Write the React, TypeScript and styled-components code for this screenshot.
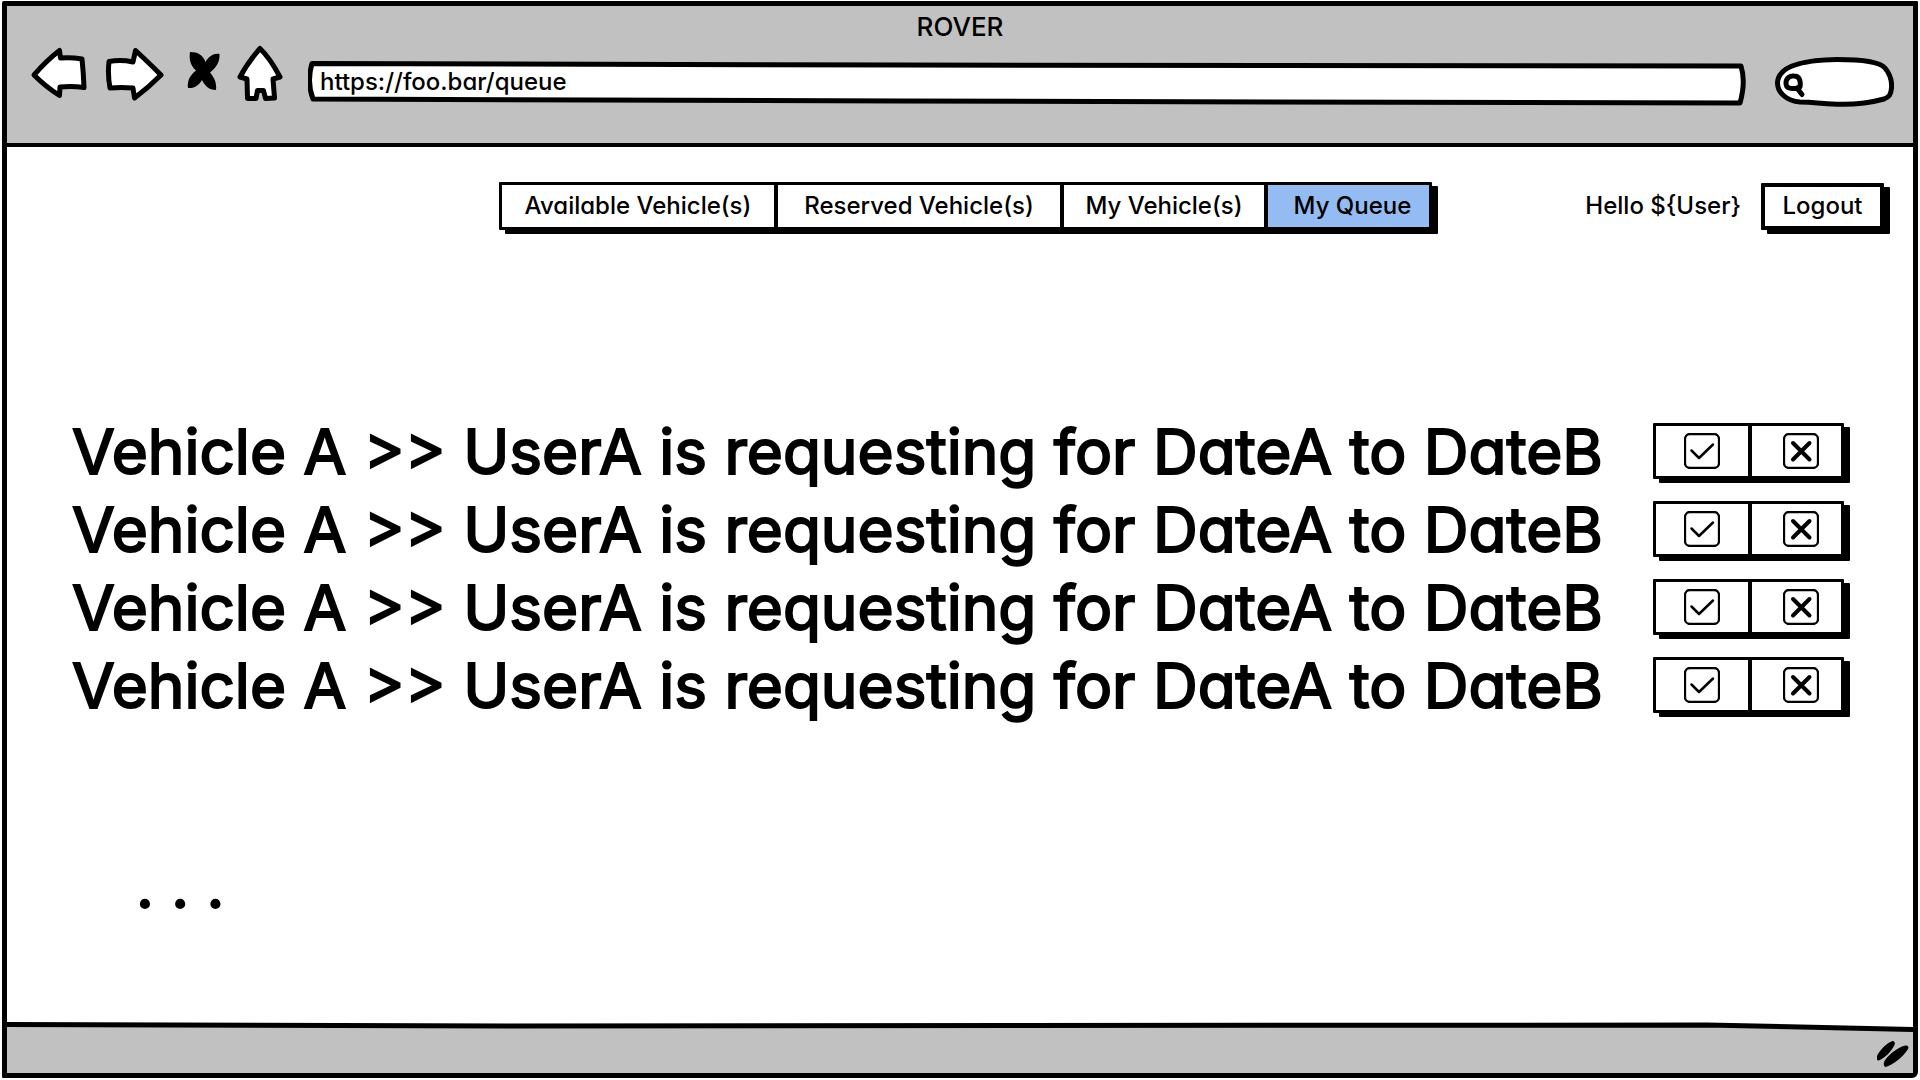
import React, { useState } from "react";
import styled, { createGlobalStyle, css } from "styled-components";

const INK = "#000000";
const CHROME = "#c1c1c1";
const PAPER = "#ffffff";
const ACTIVE = "#94bbf2";

const GlobalStyle = createGlobalStyle`
  *, *::before, *::after { box-sizing: border-box; }
  body {
    margin: 0;
    background: ${PAPER};
    color: ${INK};
    font-family: Inter, "Liberation Sans", sans-serif;
    font-size: 24px;
    font-weight: 500;
    line-height: 32px;
    font-feature-settings: "cv11";
  }
  button, input {
    font: inherit;
    font-feature-settings: inherit;
    color: inherit;
  }
`;

const Page = styled.div`
  display: flex;
  min-height: 100vh;
  padding: 1px 2px 2px;
`;

const Frame = styled.div`
  flex: 1;
  display: flex;
  flex-direction: column;
  border: 5px solid ${INK};
  border-radius: 2px 1px 6px 1px;
  overflow: hidden;
`;

/* Browser chrome */

const Chrome = styled.header`
  padding: 5px 19px 36px 23px;
  background: ${CHROME};
  border-bottom: 4px solid ${INK};
`;

const WindowTitle = styled.h1`
  margin: 0 0 2px;
  padding-right: 4px;
  font-size: 26px;
  font-weight: 500;
  line-height: 32px;
  text-align: center;
`;

const Toolbar = styled.div`
  display: flex;
  align-items: flex-end;
`;

const HistoryControls = styled.div`
  display: flex;
  gap: 16px;
  padding-bottom: 6px;
`;

const PlainButton = styled.button`
  display: flex;
  align-items: center;
  justify-content: center;
  padding: 0;
  border: 0;
  background: none;
  cursor: pointer;
`;

const Sketch = styled.svg`
  display: block;
  fill: ${PAPER};
  stroke: ${INK};
  stroke-width: 5px;
  stroke-linejoin: round;
  stroke-linecap: round;
`;

const Field = styled.div`
  position: relative;
  display: flex;
`;

const FieldOutline = styled(Sketch)`
  position: absolute;
  inset: 0;
  width: 100%;
  height: 100%;
`;

const AddressField = styled(Field)`
  flex: 1;
  height: 46px;
  margin: 0 28px 0 24px;
`;

const SearchField = styled(Field)`
  width: 120px;
  height: 50px;
`;

const FieldInput = styled.input`
  position: relative;
  flex: 1;
  min-width: 0;
  height: 40px;
  padding: 0 12px;
  border: 0;
  background: none;
  outline: none;
`;

const SearchInput = styled(FieldInput)`
  padding: 0 16px 0 32px;
`;

/* Application */

const Content = styled.main`
  flex: 1;
  padding-top: 35px;
`;

const TopBar = styled.div`
  display: grid;
  grid-template-columns: 1fr auto 1fr;
  align-items: center;
  padding: 0 29px 0 40px;
`;

const sketchBox = css`
  border: 3px solid ${INK};
  border-radius: 1px;
  background: ${PAPER};
  box-shadow: 6px 4px 0 ${INK};
`;

const Segments = styled.div`
  ${sketchBox}
  display: flex;
`;

const Segment = styled(PlainButton)<{ $width: number; $height: number; $active?: boolean }>`
  width: ${(p) => p.$width}px;
  height: ${(p) => p.$height}px;
  background: ${(p) => (p.$active ? ACTIVE : PAPER)};
  white-space: nowrap;

  & + & {
    border-left: 4px solid ${INK};
  }

  &:last-child {
    padding-left: 8px;
  }
`;

const TabBar = styled.nav`
  grid-column: 2;
`;

const Account = styled.div`
  display: flex;
  align-items: center;
  justify-content: flex-end;
  gap: 20px;
`;

const LogoutButton = styled(PlainButton)`
  ${sketchBox}
  width: 123px;
  height: 47px;
  border-width: 4px;
`;

const RequestList = styled.ul`
  margin: 183px 0 0;
  padding: 0 69px 0 65px;
  list-style: none;
`;

const largeText = css`
  font-size: 62px;
  font-weight: 400;
  line-height: 78px;
  -webkit-text-stroke: 2px ${INK};
`;

const RequestRow = styled.li`
  display: flex;
  align-items: center;
  justify-content: space-between;
  gap: 32px;
`;

const RequestText = styled.span`
  ${largeText}
`;

const Decision = styled.div`
  padding-bottom: 2px;
`;

const More = styled.p`
  ${largeText}
  margin: 122px 0 0;
  padding-left: 129px;
`;

const StatusBar = styled.footer`
  background: ${CHROME};
`;

const StatusRule = styled.svg`
  display: block;
  width: 100%;
  height: 10px;
  background: ${PAPER};
`;

const StatusBody = styled.div`
  display: flex;
  justify-content: flex-end;
  padding: 8px 4px 5px;
`;

const BackIcon = () => (
  <Sketch width="58" height="56" viewBox="30 45 58 56" aria-hidden="true">
    <path d="M34 75 Q46 61 59.500 50.500 L60.500 58 Q71 57 82 59 Q83.500 73 84 87.500 Q72 86 60 87 L59.500 95.500 Q46 87 34 75Z" />
  </Sketch>
);

const ForwardIcon = () => (
  <Sketch width="60" height="56" viewBox="104 45 60 56" aria-hidden="true">
    <path d="M109 61.500 Q121 59.500 133 62 L135.500 50.500 Q147 61 161 75 Q149 87 134.500 98 L133 88 Q121 87 110 88 Q107.500 75 109 61.500Z" />
  </Sketch>
);

const StopIcon = () => (
  <svg width="40" height="56" viewBox="180 45 40 56" aria-hidden="true">
    <path
      fill={INK}
      d="M190 52C198 52 203 55 205.500 62C209 56 214 53 219.500 54C220 62 216 68 210 72.500C214 77 217 83 216 90C209 90 205 86 202 80C199 85 195 88.500 188 88C187 81 190 75 196 70.500C190 65 189 59 190 52Z"
    />
  </svg>
);

const HomeIcon = () => (
  <Sketch width="48" height="56" viewBox="236 45 48 56" aria-hidden="true">
    <path d="M260 48.500 Q270 58 280 77 L273 79 L274.500 98 L265.500 98.500 L263.500 90.500 L257.500 90.500 L256 98.500 L247.500 98.500 L247 79 L240 77 Q248 62 260 48.500Z" />
  </Sketch>
);

const CheckIcon = () => (
  <svg width="36" height="36" viewBox="0 0 36 36" fill="none" stroke={INK} strokeLinecap="round" strokeLinejoin="round" aria-hidden="true">
    <rect x="1" y="1" width="34" height="34" rx="5" strokeWidth="2.300" />
    <path d="M7.500 17.500 L15 25 L29 11.500" strokeWidth="2.500" />
  </svg>
);

const RejectIcon = () => (
  <svg width="36" height="36" viewBox="0 0 36 36" fill="none" stroke={INK} strokeLinecap="round" aria-hidden="true">
    <rect x="1" y="1" width="34" height="34" rx="5" strokeWidth="2.300" />
    <path d="M10 10 L26.500 26.500 M26.500 10 L10 26.500" strokeWidth="4" />
  </svg>
);

const ResizeGrip = () => (
  <svg width="32" height="28" viewBox="1877 1041 32 28" aria-hidden="true">
    <path
      fill={INK}
      d="M1892.500 1042C1894 1041.500 1895.500 1043.500 1894.500 1046C1891 1053 1885 1059 1878.500 1061.500C1876 1061.500 1876.500 1057 1878 1055C1882 1049 1887 1044 1892.500 1042ZM1905.500 1046.500C1908 1046 1909 1048 1908 1050C1903 1058 1893 1066 1885.500 1068C1883 1067 1883.500 1063 1885.500 1060.500C1891 1054 1898 1048 1905.500 1046.500Z"
    />
  </svg>
);

const TABS = [
  { label: "Available Vehicle(s)", width: 272 },
  { label: "Reserved Vehicle(s)", width: 286 },
  { label: "My Vehicle(s)", width: 204 },
  { label: "My Queue", width: 165 },
];

const REQUESTS = [1, 2, 3, 4].map((id) => ({
  id,
  text: "Vehicle A >> UserA is requesting for DateA to DateB",
}));

export default function App() {
  const [active, setActive] = useState("My Queue");

  return (
    <>
      <GlobalStyle />
      <Page>
        <Frame>
          <Chrome>
            <WindowTitle>ROVER</WindowTitle>
            <Toolbar>
              <HistoryControls>
                <PlainButton aria-label="Back"><BackIcon /></PlainButton>
                <PlainButton aria-label="Forward"><ForwardIcon /></PlainButton>
                <PlainButton aria-label="Stop"><StopIcon /></PlainButton>
                <PlainButton aria-label="Home"><HomeIcon /></PlainButton>
              </HistoryControls>
              <AddressField>
                <FieldOutline viewBox="308 61 1438 46" preserveAspectRatio="none" aria-hidden="true">
                  <path d="M312 63.500 L900 65 L1741 66 Q1746 82 1740 103 L900 101 L313 99 Q306.500 82 312 63.500Z" />
                </FieldOutline>
                <FieldInput aria-label="Address" defaultValue="https://foo.bar/queue" />
              </AddressField>
              <SearchField>
                <FieldOutline viewBox="1774 57 120 50" aria-hidden="true">
                  <path d="M1777.500 83C1778 66 1802 60 1837 59.500C1862 59.500 1880 62 1885 68C1890 74 1892 82 1891.500 88C1891 95 1889 97 1884 99C1866 104 1850 105 1832 104C1818 103 1810 102 1800 102C1786 101 1777.500 92 1777.500 83Z" />
                  <path d="M1786 83C1786 78 1790 75.500 1794 76C1799 76 1801 80 1800 87L1797 88.500C1789 89 1786 88 1786 83ZM1797 88L1802 94.500" />
                </FieldOutline>
                <SearchInput type="search" aria-label="Search" />
              </SearchField>
            </Toolbar>
          </Chrome>

          <Content>
            <TopBar>
              <TabBar aria-label="Sections">
                <Segments>
                  {TABS.map((tab) => (
                    <Segment
                      key={tab.label}
                      $width={tab.width}
                      $height={42}
                      $active={tab.label === active}
                      onClick={() => setActive(tab.label)}
                    >
                      {tab.label}
                    </Segment>
                  ))}
                </Segments>
              </TabBar>
              <Account>
                <span>{"Hello ${User}"}</span>
                <LogoutButton>Logout</LogoutButton>
              </Account>
            </TopBar>

            <RequestList>
              {REQUESTS.map((request) => (
                <RequestRow key={request.id}>
                  <RequestText>{request.text}</RequestText>
                  <Decision>
                    <Segments>
                      <Segment $width={92} $height={50} aria-label="Approve"><CheckIcon /></Segment>
                      <Segment $width={93} $height={50} aria-label="Reject"><RejectIcon /></Segment>
                    </Segments>
                  </Decision>
                </RequestRow>
              ))}
            </RequestList>

            <More>. . .</More>
          </Content>

          <StatusBar>
            <StatusRule viewBox="0 0 1906 10" preserveAspectRatio="none" aria-hidden="true">
              <path fill={CHROME} d="M0 3 L500 4 L1700 3 L1906 7 V10 H0Z" />
              <path fill="none" stroke={INK} strokeWidth="5" d="M0 2.500 L500 4 L1700 3 L1906 7.500" />
            </StatusRule>
            <StatusBody>
              <ResizeGrip />
            </StatusBody>
          </StatusBar>
        </Frame>
      </Page>
    </>
  );
}
